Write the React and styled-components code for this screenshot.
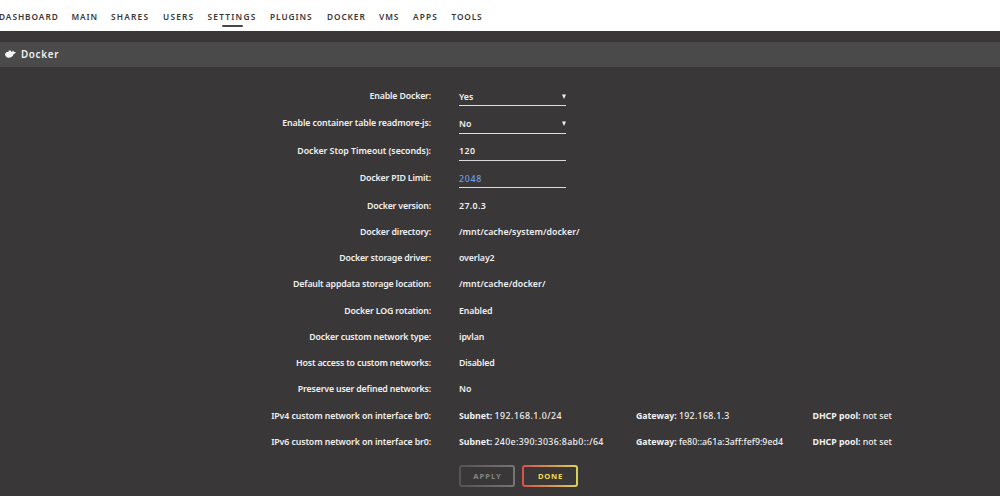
import React from "react";
import styled, { createGlobalStyle, css } from "styled-components";

const Global = createGlobalStyle`
  *, *::before, *::after { box-sizing: border-box; }
  body {
    margin: 0;
    background: #3a3738;
    color: #f0f0f0;
    font-family: "Noto Sans", "Open Sans", sans-serif;
    font-size: 8.8px;
    font-weight: 600;
    overflow: hidden;
  }
`;

const Page = styled.div`
  width: 1000px;
  height: 496px;
  overflow: hidden;
  display: flex;
  flex-direction: column;
`;

const Nav = styled.nav`
  height: 31px;
  flex: none;
  display: flex;
  margin-left: -1px;
  background: #fff;
`;

const NavItem = styled.a`
  flex: none;
  width: ${(p) => p.$w}px;
  display: flex;
  flex-direction: column;
  align-items: flex-start;
  padding-top: 11px;
  color: #3a3738;
  font-size: 8.3px;
  line-height: 12px;
  font-weight: 600;
  letter-spacing: ${(p) => p.$ls}px;
  white-space: nowrap;
`;

const ActiveBar = styled.span`
  width: 21px;
  height: 1.5px;
  margin: 2px 0 0 14.5px;
  border-radius: 1px;
  background: #4a4748;
`;

const TitleBar = styled.header`
  height: 25px;
  flex: none;
  margin-top: 11px;
  padding: 0 0 0 5px;
  display: flex;
  align-items: center;
  background: #4a4a4a;
`;

const DockerMark = styled.svg`
  width: 11px;
  height: 10px;
  margin-bottom: 2px;
`;

const Title = styled.h1`
  margin: 0 0 0 5px;
  font-size: 9.8px;
  font-weight: 600;
  line-height: 14px;
  letter-spacing: 0.7px;
`;

const Form = styled.main`
  padding-top: 16px;
  display: flex;
  flex-direction: column;
`;

const Row = styled.div`
  flex: none;
  height: ${(p) => (p.$field ? 27.4 : 26.25)}px;
  display: grid;
  grid-template-columns: 431px 1fr;
  column-gap: 28px;
  line-height: ${(p) => (p.$field ? 27 : 26)}px;
  white-space: nowrap;
`;

const Label = styled.label`
  text-align: right;
  letter-spacing: ${(p) => p.$ls ?? -0.18}px;
`;

const Value = styled.span`
  letter-spacing: ${(p) => p.$ls ?? 0}px;
`;

const Field = styled.div`
  width: 107px;
  height: 23.2px;
  padding-top: ${(p) => (p.$select ? 1 : 0)}px;
  display: flex;
  justify-content: space-between;
  border-bottom: 1px solid #dcdcdc;
  line-height: 26px;
  ${(p) =>
    p.$hint &&
    css`
      padding-top: 1px;
      color: #6a9fe6;
      font-weight: 500;
    `}
`;

const Arrow = styled.svg`
  width: 4px;
  height: 5px;
  margin-top: 10px;
`;

const Network = styled.div`
  display: grid;
  grid-template-columns: 177px 176.5px 1fr;
  font-weight: 500;
  b { font-weight: 700; letter-spacing: -0.03px; }
`;

const Actions = styled.div`
  margin: 9.5px 0 0 459px;
  display: flex;
  gap: 7px;
`;

const Button = styled.button`
  width: 56px;
  height: 22px;
  padding: 0 0 0 1px;
  border: 2px solid transparent;
  border-radius: 3px;
  background: linear-gradient(#3a3738, #3a3738) padding-box,
    linear-gradient(90deg, ${(p) => p.$from}, ${(p) => p.$to}) border-box;
  color: ${(p) => p.$color};
  font: 700 7.6px/18px "Noto Sans", sans-serif;
  letter-spacing: ${(p) => p.$ls}px;
`;

const tabs = [
  ["DASHBOARD", 72.5, 0.95],
  ["MAIN", 39.5, 0.9],
  ["SHARES", 52, 1.2],
  ["USERS", 44.5, 1.2],
  ["SETTINGS", 62.5, 1.25],
  ["PLUGINS", 57, 0.95],
  ["DOCKER", 52, 0.9],
  ["VMS", 34, 0.95],
  ["APPS", 38.5, 1.15],
  ["TOOLS", 40, 0.85],
];

const fields = [
  { label: "Enable Docker:", value: "Yes", select: true },
  { label: "Enable container table readmore-js:", value: "No", select: true, labelLs: -0.12 },
  { label: "Docker Stop Timeout (seconds):", value: "120", ls: 0.5, labelLs: -0.05 },
  { label: "Docker PID Limit:", value: "2048", hint: true, ls: 0.7 },
];

const settings = [
  ["Docker version:", "27.0.3", 0.35],
  ["Docker directory:", "/mnt/cache/system/docker/", 0.02],
  ["Docker storage driver:", "overlay2", -0.13],
  ["Default appdata storage location:", "/mnt/cache/docker/", 0.03],
  ["Docker LOG rotation:", "Enabled", -0.15],
  ["Docker custom network type:", "ipvlan", -0.1],
  ["Host access to custom networks:", "Disabled", -0.2],
  ["Preserve user defined networks:", "No", -0.1],
];

const networks = [
  ["IPv4", "192.168.1.0/24", 0.48, "192.168.1.3", 0.3],
  ["IPv6", "240e:390:3036:8ab0::/64", 0.34, "fe80::a61a:3aff:fef9:9ed4", 0.02],
];

export default function App() {
  return (
    <Page>
      <Global />
      <Nav>
        {tabs.map(([name, w, ls]) => (
          <NavItem key={name} $w={w} $ls={ls}>
            {name}
            {name === "SETTINGS" && <ActiveBar />}
          </NavItem>
        ))}
      </Nav>
      <TitleBar>
        <DockerMark viewBox="0 0 11 10">
          <path
            fill="#f4f4f4"
            d="M0 4.2H1.2V3H3.6V1.5H6V2.8H7.2L7.8 1.4C8.6 1.8 8.9 2.5 8.9 3C9.7 2.8 10.4 3 10.8 3.3C10.4 4.4 9.7 4.7 8.8 4.8C8 7.5 6.2 8.7 3.8 8.7C1.3 8.7 0 7 0 4.2Z"
          />
        </DockerMark>
        <Title>Docker</Title>
      </TitleBar>
      <Form>
        {fields.map((f) => (
          <Row key={f.label} $field>
            <Label $ls={f.labelLs}>{f.label}</Label>
            <Field $hint={f.hint} $select={f.select}>
              <Value $ls={f.ls}>{f.value}</Value>
              {f.select && (
                <Arrow viewBox="0 0 4 5">
                  <path d="M0 0.5H4L2 5Z" fill="#f4f4f4" />
                </Arrow>
              )}
            </Field>
          </Row>
        ))}
        {settings.map(([label, value, ls]) => (
          <Row key={label}>
            <Label>{label}</Label>
            <Value $ls={ls}>{value}</Value>
          </Row>
        ))}
        {networks.map(([kind, subnet, subnetLs, gateway, gatewayLs]) => (
          <Row key={kind}>
            <Label $ls={-0.12}>{kind} custom network on interface br0:</Label>
            <Network>
              <span><b>Subnet:</b> <Value $ls={subnetLs}>{subnet}</Value></span>
              <span><b>Gateway:</b> <Value $ls={gatewayLs}>{gateway}</Value></span>
              <span><b>DHCP pool:</b> not set</span>
            </Network>
          </Row>
        ))}
        <Actions>
          <Button $from="#555354" $to="#777576" $color="#858384" $ls={1}>APPLY</Button>
          <Button $from="#d9504a" $to="#d8d457" $color="#f2dc4e" $ls={0.7}>DONE</Button>
        </Actions>
      </Form>
    </Page>
  );
}
